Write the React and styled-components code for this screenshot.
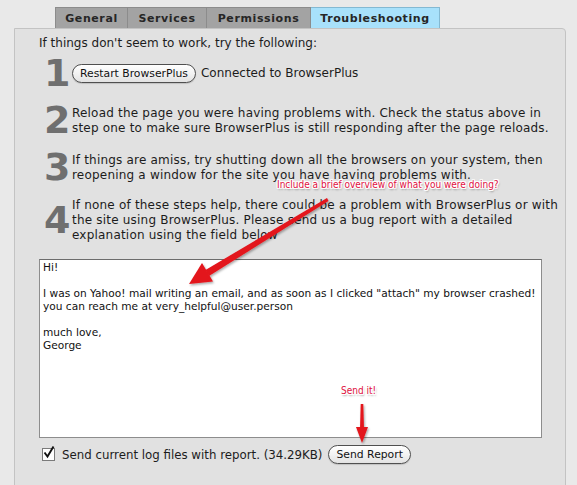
import React from "react";
import styled, { createGlobalStyle } from "styled-components";

const GlobalStyle = createGlobalStyle`
  body {
    margin: 0;
    background: #e9e9e9;
    font-family: "DejaVu Sans", "Noto Sans", sans-serif;
    color: #1c1c1c;
  }
`;

const tabs = [
  { label: "General", width: 73 },
  { label: "Services", width: 79 },
  { label: "Permissions", width: 104 },
  { label: "Troubleshooting", width: 129 },
];

const steps = [
  null,
  "Reload the page you were having problems with. Check the status above in|step one to make sure BrowserPlus is still responding after the page reloads.",
  "If things are amiss, try shutting down all the browsers on your system, then|reopening a window for the site you have having problems with.",
  "If none of these steps help, there could be a problem with BrowserPlus or with|the site using BrowserPlus. Please send us a bug report with a detailed|explanation using the field below",
];

const report = `Hi!

I was on Yahoo! mail writing an email, and as soon as I clicked "attach" my browser crashed!
you can reach me at very_helpful@user.person

much love,
George`;

function App() {
  return (
    <Page>
      <GlobalStyle />
      <TabBar>
        {tabs.map((t) => (
          <Tab key={t.label} $w={t.width} $active={t.label === "Troubleshooting"}>
            {t.label}
          </Tab>
        ))}
      </TabBar>
      <Panel>
        <Intro>If things don't seem to work, try the following:</Intro>
        <Steps>
          {steps.map((s, i) => (
            <Step key={i}>
              <StepNum>{i + 1}</StepNum>
              {s === null ? (
                <StepBody>
                  <PillButton>Restart BrowserPlus</PillButton>
                  <span>Connected to BrowserPlus</span>
                </StepBody>
              ) : (
                <StepText>
                  {s.split("|").map((line, j) => (
                    <div key={j}>{line}</div>
                  ))}
                </StepText>
              )}
            </Step>
          ))}
        </Steps>
        <ReportBox defaultValue={report} spellCheck={false} />
        <SendRow>
          <Check>
            <svg width="13" height="13" viewBox="0 0 13 13">
              <path d="M2.5 6.5 L5.5 10.5 L11.5 0.5" fill="none" stroke="#111" strokeWidth="1.9" />
            </svg>
          </Check>
          <span>Send current log files with report. (34.29KB)</span>
          <PillButton>Send Report</PillButton>
        </SendRow>
      </Panel>

      <Note $x={277} $y={179}>Include a brief overview of what you were doing?</Note>
      <Note $x={341} $y={385}>Send it!</Note>
      <Arrows width="577" height="485" viewBox="0 0 577 485">
        <defs>
          <filter id="sh" x="-20%" y="-20%" width="140%" height="140%">
            <feDropShadow dx="1" dy="1.5" stdDeviation="1.2" floodColor="#000" floodOpacity="0.35" />
          </filter>
        </defs>
        <g filter="url(#sh)" fill="#e3141b">
          <polygon points="327,198 328.5,201 209,276 205.5,270" />
          <polygon points="189,284 213,281.5 202,263" />
          <polygon points="360.7,404 363.3,404 364,430 360,430" />
          <polygon points="362,443 356,427 368,427" />
        </g>
      </Arrows>
    </Page>
  );
}

const Page = styled.div`
  position: relative;
  width: 577px;
  height: 485px;
  overflow: hidden;
  padding-top: 7px;
  box-sizing: border-box;
`;

const TabBar = styled.div`
  display: flex;
  margin-left: 55px;
`;

const Tab = styled.div`
  width: ${(p) => p.$w}px;
  height: 21px;
  box-sizing: border-box;
  display: flex;
  align-items: center;
  justify-content: center;
  font-size: 11px;
  font-weight: bold;
  letter-spacing: 0.6px;
  color: #262626;
  background: ${(p) => (p.$active ? "#a8e1fb" : "#a3a3a3")};
  border: 1px solid ${(p) => (p.$active ? "#84b9d2" : "#8c8c8c")};
  border-bottom: none;
  & + & {
    border-left: none;
  }
`;

const Panel = styled.div`
  margin-left: 14px;
  width: 552px;
  height: 470px;
  box-sizing: border-box;
  background: #e1e1e1;
  border: 1px solid #c3c3c3;
  border-radius: 0 4px 0 0;
  padding: 7px 0 0 24px;
`;

const Intro = styled.div`
  font-size: 12px;
  line-height: 15px;
`;

const Steps = styled.div`
  display: flex;
  flex-direction: column;
  gap: 11px;
  margin-top: 4px;
  margin-bottom: 16px;
`;

const Step = styled.div`
  display: flex;
  align-items: center;
`;

const StepNum = styled.div`
  width: 24px;
  margin-left: 5px;
  margin-right: 4px;
  text-align: center;
  font-size: 38px;
  line-height: 36px;
  font-weight: bold;
  color: #6f6f6f;
`;

const StepBody = styled.div`
  display: flex;
  align-items: center;
  gap: 5px;
  font-size: 12px;
`;

const StepText = styled.div`
  font-size: 12px;
  line-height: 15px;
  letter-spacing: 0.2px;
  white-space: nowrap;
  margin-top: 2px;
`;

const PillButton = styled.button`
  height: 19px;
  padding: 0 7px;
  border: 1px solid #4f4f4f;
  border-radius: 10px;
  background: linear-gradient(#ffffff, #f1f1f1 55%, #e2e2e2);
  font-family: inherit;
  font-size: 10.8px;
  color: #111;
  box-shadow: 0 1px 1px rgba(0, 0, 0, 0.15);
`;

const ReportBox = styled.textarea`
  display: block;
  width: 503px;
  height: 179px;
  box-sizing: border-box;
  margin: 0;
  padding: 1px 3px;
  resize: none;
  border: 1px solid #8d8d8d;
  border-top-color: #6c6c6c;
  background: #fff;
  font-family: "DejaVu Sans", sans-serif;
  font-size: 10.6px;
  line-height: 13px;
  color: #111;
  outline: none;
`;

const SendRow = styled.div`
  display: flex;
  align-items: center;
  gap: 6px;
  margin-top: 7px;
  margin-left: 3px;
  font-size: 11.8px;
`;

const Check = styled.span`
  position: relative;
  width: 11px;
  height: 11px;
  border: 1px solid #7a7a7a;
  background: #fff;
  margin-right: 1px;

  svg {
    position: absolute;
    left: -1px;
    top: -3px;
  }
`;

const Note = styled.div`
  position: absolute;
  left: ${(p) => p.$x}px;
  top: ${(p) => p.$y}px;
  font-family: "DejaVu Sans Condensed", "DejaVu Sans", sans-serif;
  font-size: 10px;
  color: #e0103f;
  white-space: nowrap;
  text-shadow: 1px 0 0 #fff, -1px 0 0 #fff, 0 1px 0 #fff, 0 -1px 0 #fff,
    1px 1px 0 #fff, -1px -1px 0 #fff, 1px -1px 0 #fff, -1px 1px 0 #fff,
    1px 2px 2px rgba(0, 0, 0, 0.4);
`;

const Arrows = styled.svg`
  position: absolute;
  left: 0;
  top: 0;
  pointer-events: none;
`;

export default App;
